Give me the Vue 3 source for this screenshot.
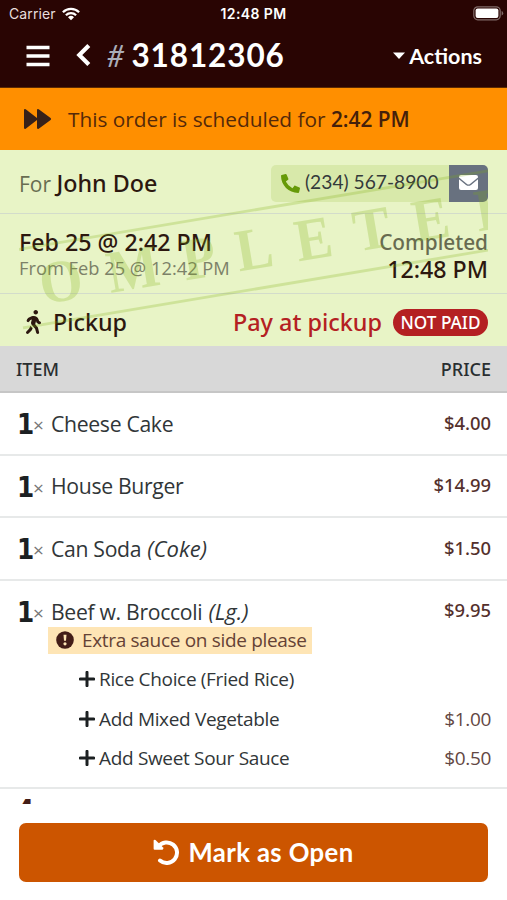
<script setup>
const items = [
  { name: 'Cheese Cake', price: '$4.00' },
  { name: 'House Burger', price: '$14.99' },
  { name: 'Can Soda', size: '(Coke)', price: '$1.50' },
  {
    name: 'Beef w. Broccoli',
    size: '(Lg.)',
    price: '$9.95',
    note: 'Extra sauce on side please',
    extras: [
      { name: 'Rice Choice (Fried Rice)', price: '' },
      { name: 'Add Mixed Vegetable', price: '$1.00' },
      { name: 'Add Sweet Sour Sauce', price: '$0.50' },
    ],
  },
]
const stamp = [
  ['O', 65], ['M', 138], ['P', 205], ['L', 261], ['E', 321], ['T', 380], ['E', 440], ['D', 505],
]
</script>

<template>
  <div class="screen">
    <header class="top">
      <div class="status">
        <div class="carrier">
          <span>Carrier</span>
          <svg width="18" height="14" viewBox="0 0 18 14" fill="none" stroke="#fff" stroke-width="2.3">
            <path d="M.9 5.2a11.6 11.6 0 0 1 16.2 0" />
            <path d="M3.9 8.2a7.3 7.3 0 0 1 10.2 0" />
            <path d="M6 10.2a4.3 4.3 0 0 1 6 0L9 13.3z" fill="#fff" stroke="none" />
          </svg>
        </div>
        <div class="clock">12:48 PM</div>
        <div class="battery">
          <svg width="31" height="15" viewBox="0 0 31 15">
            <rect x=".8" y=".8" width="26.4" height="13" rx="4" fill="none" stroke="#806b69" stroke-width="1.2" />
            <rect x="2.6" y="2.6" width="22.8" height="9.4" rx="2" fill="#fff" />
            <path d="M28.6 5v4.6q1.6-.6 1.6-2.3T28.6 5z" fill="#806b69" />
          </svg>
        </div>
      </div>
      <nav class="nav">
        <svg class="menu" width="24" height="22" viewBox="0 0 24 22">
          <path d="M.5 2.5h23M.5 11h23M.5 19.5h23" stroke="#fff" stroke-width="3.6" />
        </svg>
        <svg class="back" width="16" height="24" viewBox="0 0 16 24">
          <path d="M12.8 2.5 3.3 12l9.5 9.5" fill="none" stroke="#fff" stroke-width="4.2" />
        </svg>
        <span class="hash">#</span>
        <span class="number">31812306</span>
        <div class="actions">
          <svg width="12" height="8" viewBox="0 0 12 8"><path d="M0 .5h12L6 7z" fill="#fff" /></svg>
          <span>Actions</span>
        </div>
      </nav>
    </header>

    <div class="schedule">
      <svg width="29" height="22" viewBox="0 0 29 22">
        <path d="M1 2.2Q1 .5 2.7 1.3L14 10V2.2q0-1.7 1.7-.9L27.6 10q1 1 0 2L15.7 20.7q-1.7.8-1.7-.9V12L2.7 20.7Q1 21.5 1 19.8z" fill="#372119" />
      </svg>
      <span class="schedule-text">This order is scheduled for <b>2:42 PM</b></span>
    </div>

    <section class="info">
      <div class="row customer">
        <div class="for">For <b>John Doe</b></div>
        <div class="contact">
          <div class="phone">
            <svg width="19" height="19" viewBox="0 0 512 512">
              <path d="M493 25 389 1c-11-3-23 3-27 14l-48 112c-4 10-1 22 7 28l61 50a371 371 0 0 1-177 177l-50-61c-6-8-18-11-28-7L15 362C4 366-2 378 1 389l24 104c3 11 12 19 24 19 256 0 463-207 463-463 0-12-8-21-19-24z" transform="matrix(-1 0 0 1 512 0)" fill="#669a08" />
            </svg>
            <span>(234) 567-8900</span>
          </div>
          <div class="mail">
            <svg width="19" height="15" viewBox="0 0 19 15">
              <path d="M2 0h15q2 0 2 2v.5L11 9q-1.5 1.1-3 0L0 2.5V2Q0 0 2 0z" fill="#fff" />
              <path d="M0 4.2 7 9.9q2.5 1.7 5 0l7-5.7V13q0 2-2 2H2q-2 0-2-2z" fill="#fff" />
            </svg>
          </div>
        </div>
      </div>
      <div class="row times">
        <div class="left">
          <div class="due">Feb 25 @ 2:42 PM</div>
          <div class="from">From Feb 25 @ 12:42 PM</div>
        </div>
        <div class="right">
          <div class="done">Completed</div>
          <div class="done-time">12:48 PM</div>
        </div>
      </div>
      <div class="row pay">
        <svg class="walker" width="15" height="24" viewBox="0 0 320 512">
          <path fill="#2c170f" d="M208 96c26.5 0 48-21.5 48-48S234.5 0 208 0s-48 21.5-48 48 21.5 48 48 48zm94.5 149.1l-23.3-11.8-9.7-29.4c-14.7-44.6-55.7-75.8-102.2-75.9-36-.1-55.9 10.1-93.3 25.2-21.6 8.7-39.3 25.2-49.7 46.2L17.6 213c-7.8 15.8-1.5 35 14.2 42.9 15.6 7.9 34.6 1.5 42.5-14.3L81 228c3.5-7 9.3-12.5 16.5-15.4l26.8-10.8-15.2 60.7c-5.2 20.8.4 42.9 14.900 58.800l59.900 65.400c7.200 7.900 12.300 17.400 14.900 27.700l18.300 73.300c4.300 17.100 21.700 27.600 38.800 23.300 17.100-4.300 27.600-21.700 23.300-38.800l-22.200-89c-2.600-10.300-7.700-19.900-14.900-27.700l-45.500-49.700 17.200-68.700 5.500 16.500c5.300 16.100 16.700 29.400 31.700 37l23.300 11.800c15.600 7.900 34.600 1.500 42.500-14.300 7.700-15.700 1.400-35.100-14.300-43zM73.600 385.800c-3.200 8.100-8 15.400-14.200 21.500l-50 50.100c-12.500 12.500-12.500 32.800 0 45.300s32.700 12.500 45.200 0l59.400-59.400c6.100-6.100 10.900-13.400 14.200-21.500l13.500-33.800c-55.300-60.300-38.700-41.800-47.400-53.700l-20.700 51.500z" />
        </svg>
        <span class="pickup">Pickup</span>
        <span class="pay-at">Pay at pickup</span>
        <span class="badge">NOT PAID</span>
      </div>
      <svg class="stamp" width="469" height="196" viewBox="19 150 469 196">
        <g transform="translate(0 311.5) rotate(-9.5)">
          <path d="M20 -58.2H520M20 20H520" stroke="#7fae10" stroke-width="2.8" />
          <g transform="scale(.92 1)">
            <text v-for="(l, i) in stamp" :key="i" :x="l[1] / 0.92" y="0">{{ l[0] }}</text>
          </g>
        </g>
      </svg>
    </section>

    <div class="head"><span>ITEM</span><span>PRICE</span></div>

    <main class="list">
      <article v-for="item in items" :key="item.name" class="item">
        <div class="line">
          <span class="qty">1</span><span class="times-sign">×</span>
          <span class="name">{{ item.name }} <i v-if="item.size">{{ item.size }}</i></span>
          <span class="price">{{ item.price }}</span>
        </div>
        <div v-if="item.note" class="note">
          <svg width="18" height="18" viewBox="0 0 18 18">
            <circle cx="9" cy="9" r="8.8" fill="#431d17" />
            <path d="M7.5 3.8h3l-.5 6H8z" fill="#fee5b5" />
            <circle cx="9" cy="12.8" r="1.6" fill="#fee5b5" />
          </svg>
          <span>{{ item.note }}</span>
        </div>
        <div v-if="item.extras" class="extras">
          <div v-for="extra in item.extras" :key="extra.name" class="extra">
            <svg width="16" height="16" viewBox="0 0 16 16">
              <path d="M8 1.3v13.4M1.3 8h13.4" stroke="#1c2022" stroke-width="3" stroke-linecap="round" />
            </svg>
            <span class="extra-name">{{ extra.name }}</span>
            <span class="extra-price">{{ extra.price }}</span>
          </div>
        </div>
      </article>
      <article class="item next">
        <div class="line">
          <span class="qty">4</span><span class="times-sign">×</span>
          <span class="name">House Salad</span>
        </div>
      </article>
    </main>

    <footer class="footer">
      <button class="open">
        <svg width="27" height="26" viewBox="0 0 27 26">
          <path d="M5.5 7.5A10.3 10.3 0 1 1 7 21.5" fill="none" stroke="#fff" stroke-width="4" stroke-linecap="round" />
          <path d="M.6 1.8v8q0 1 1 1h8l1-1.8L2.5.9Q.6.5.6 1.8z" fill="#fff" />
        </svg>
        <span>Mark as Open</span>
      </button>
    </footer>
  </div>
</template>

<style>
body { margin: 0; background: #fff; }
</style>

<style scoped>
* { box-sizing: border-box; }
svg { display: block; flex: none; }
.screen { width: 507px; height: 900px; overflow: hidden; display: flex; flex-direction: column; background: #fff; font-family: "Open Sans", "Noto Sans", sans-serif; color: #313638; white-space: nowrap; }
.screen > * { flex: none; }
.top { height: 88px; background: #290503; color: #fff; border-bottom: 1px solid #5b2a02; }
.status { height: 27px; display: grid; grid-template-columns: 1fr auto 1fr; align-items: center; font: 500 14px/20px Inter, sans-serif; padding: 1px 6px 0 9px; }
.carrier { display: flex; align-items: center; gap: 6px; font-weight: 400; color: #e8dedd; letter-spacing: .1px; }
.clock { font-weight: 600; letter-spacing: .4px; margin-left: -3px; }
.battery { display: flex; justify-content: flex-end; margin: -2px -3px 0 0; }
.nav { height: 60px; display: flex; align-items: center; padding: 0 25px 2px 26px; font-family: Lato, sans-serif; }
.back { margin: -2px 0 0 26px; }
.hash { margin: -2px 0 0 15px; font-size: 30px; font-style: italic; color: #a9adb8; line-height: 40px; }
.number { margin-left: 7px; font-size: 31.5px; font-weight: 700; line-height: 38px; letter-spacing: .9px; margin-top: -2px; }
.actions { margin-left: auto; display: flex; align-items: center; gap: 4px; font-size: 21.5px; font-weight: 700; line-height: 30px; }
.schedule { height: 62px; background: #ff8f00; display: flex; align-items: center; padding-left: 23px; color: #54290a; font-size: 20.8px; }
.schedule-text { margin-left: 16px; }
.schedule b { font-weight: 600; color: #44200b; }
.info { height: 196px; background: #e8f4c6; position: relative; color: #2c170f; }
.row { display: flex; padding: 0 19px; border-bottom: 1px solid #d3dccb; }
.customer { height: 64px; align-items: center; justify-content: space-between; padding-top: 3px; }
.for { font-size: 21px; color: #686d51; }
.for b, .due, .done, .done-time, .pickup, .pay-at, .badge, .head, .price { font-family: "Noto Sans", sans-serif; font-weight: 500; }
.for b { font-size: 23.3px; color: #2c170f; }
.contact { display: flex; height: 37px; border-radius: 5px; overflow: hidden; }
.phone { width: 178px; background: #d8e9aa; display: flex; align-items: center; padding-left: 10px; gap: 5px; font: 400 19.2px/30px Lato, sans-serif; color: #343a3a; }
.phone span { margin-top: -2px; }
.mail { width: 39px; background: #68717f; display: flex; align-items: center; justify-content: center; padding-bottom: 1px; }
.times { height: 80px; justify-content: space-between; padding-top: 14px; }
.due { font-size: 23.2px; line-height: 28px; }
.from { font-size: 18.3px; line-height: 24px; color: #7c8168; }
.right { text-align: right; }
.done { font-size: 20.8px; line-height: 28px; color: #676b50; }
.done-time { font-size: 23.2px; line-height: 26px; }
.pay { height: 52px; align-items: center; border: 0; padding-top: 4px; }
.walker { margin-left: 7px; }
.pickup { margin-left: 12px; font-size: 23.3px; }
.pay-at { margin-left: auto; color: #b42022; font-size: 23.4px; }
.badge { margin-left: 11px; width: 95px; height: 27px; border-radius: 14px; background: #b42022; color: #fff; display: flex; align-items: center; justify-content: center; font-size: 17.2px; }
.stamp { position: absolute; left: 19px; top: 0; opacity: .24; }
.stamp text { font: 700 60px "Liberation Serif", serif; text-anchor: middle; fill: #7fae10; }
.head { height: 47px; background: #d8d8d8; border-bottom: 2px solid #c6c6c6; display: flex; align-items: center; justify-content: space-between; padding: 0 16px; font-size: 18px; color: #292e30; }
.list { height: 411px; overflow: hidden; }
.item { height: 62.6px; border-bottom: 2px solid #e7e9e9; padding: 15px 16px 0 17px; }
.line { display: flex; height: 32px; align-items: center; }
.qty { font: 700 27.5px/32px "DejaVu Sans Condensed", "DejaVu Sans", sans-serif; font-stretch: condensed; width: 16px; color: #1c2022; }
.times-sign { font-size: 19px; width: 18px; color: #777; margin-top: 2px; }
.name { font-size: 21.2px; letter-spacing: -.32px; margin-top: -2px; }
.name i { font-size: 22px; letter-spacing: 0; margin-left: 1px; }
.price { margin: -4px 0 0 auto; font-size: 18.4px; color: #54302c; }
.note { display: flex; align-items: center; width: 264px; height: 27px; margin: -1px 0 0 31px; padding-left: 8px; gap: 8px; background: #fee5b5; color: #654235; font-size: 19px; letter-spacing: -.32px; }
.extras { padding-top: 6px; }
.extra { height: 39.3px; display: flex; align-items: center; padding-left: 62px; font-size: 19px; letter-spacing: -.33px; }
.extra-name { margin-left: 4px; }
.extra-price { margin-left: auto; color: #634743; }
.item:nth-child(4) { height: 208px; }
.next { padding-top: 5px; }
.next .qty { color: #431d17; }
.next .name { margin-top: 5px; }
.footer { padding: 19px 19px 0; }
.open { width: 469px; height: 59px; border: 0; border-radius: 7px; background: #cc5500; color: #fff; display: flex; align-items: center; justify-content: center; gap: 8px; padding: 0 0 2px; font: 700 25.7px/32px Lato, sans-serif; letter-spacing: .4px; }
</style>
